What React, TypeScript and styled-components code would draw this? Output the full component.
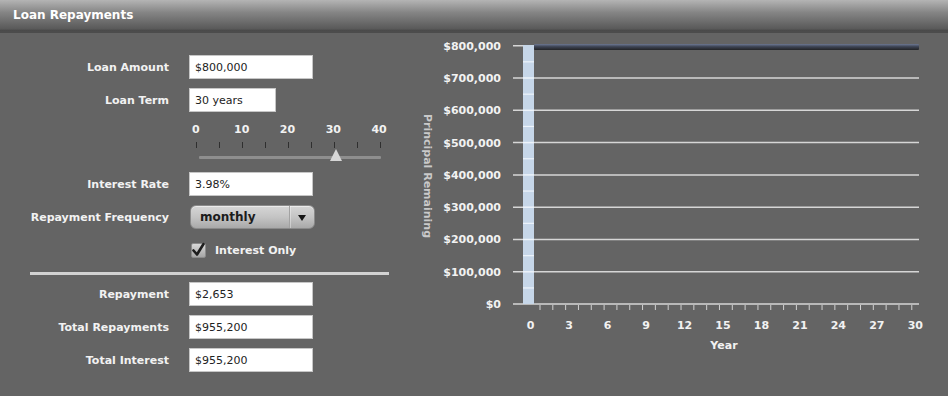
import React from 'react';
import styled, { createGlobalStyle } from 'styled-components';

const GlobalStyle = createGlobalStyle`
  html, body {
    margin: 0;
    padding: 0;
    background: #646464;
  }
  * {
    box-sizing: border-box;
  }
`;

const Page = styled.div`
  width: 948px;
  height: 396px;
  overflow: hidden;
  background: #646464;
  font-family: 'DejaVu Sans', Verdana, sans-serif;
  color: #f2f2f2;
`;

const Header = styled.div`
  height: 33px;
  padding-left: 13px;
  display: flex;
  align-items: center;
  padding-bottom: 1px;
  background: linear-gradient(#b4b4b4 0%, #858585 40%, #5a5a5a 92%, #474747 100%);
  border-bottom: 2px solid #4c4c4c;
`;

const Title = styled.h1`
  margin: 0;
  font-size: 12px;
  font-weight: bold;
  color: #ffffff;
`;

const Body = styled.div`
  display: flex;
  height: 363px;
`;

const FormPanel = styled.div`
  width: 410px;
  flex-shrink: 0;
  padding-top: 22px;
  display: flex;
  flex-direction: column;
  gap: 9px;
`;

const Row = styled.div`
  display: flex;
  align-items: center;
  height: 24px;
`;

const Label = styled.label`
  width: 169px;
  flex-shrink: 0;
  margin-right: 20px;
  text-align: right;
  font-size: 11px;
  font-weight: bold;
  color: #f2f2f2;
`;

const TextBox = styled.input<{ $w: number }>`
  width: ${(p) => p.$w}px;
  height: 24px;
  padding: 0 5px;
  border: 1px solid #c6c6c6;
  background: #ffffff;
  font-family: 'DejaVu Sans', Verdana, sans-serif;
  font-size: 11px;
  color: #222;
  outline: none;
`;

const SliderBlock = styled.div`
  margin-left: 173px;
  height: 42px;
  display: flex;
  flex-direction: column;
`;

const ScaleLabels = styled.div`
  display: grid;
  grid-template-columns: repeat(5, 45.8px);
  height: 18px;
  line-height: 18px;
  font-size: 11px;
  font-weight: bold;
  text-align: center;
  color: #f2f2f2;
`;

const Ticks = styled.div`
  margin: 3px 0 0 23px;
  width: 185px;
  height: 6px;
  display: flex;
  justify-content: space-between;
`;

const Tick = styled.span`
  width: 1px;
  height: 6px;
  background: #2f2f2f;
`;

const TrackWrap = styled.div`
  position: relative;
  margin: 1px 0 0 26px;
  width: 182px;
  height: 13px;
`;

const Track = styled.div`
  margin-top: 7px;
  height: 3px;
  background: #8e8e8e;
  border-radius: 1px;
`;

const Thumb = styled.div`
  position: absolute;
  top: 0;
  width: 0;
  height: 0;
  border-left: 6px solid transparent;
  border-right: 6px solid transparent;
  border-bottom: 12px solid #d6d6d6;
`;

const Dropdown = styled.div`
  width: 125px;
  height: 24px;
  margin-left: 1px;
  display: flex;
  border-radius: 6px;
  border: 1px solid #8a8a8a;
  background: linear-gradient(#d6d6d6 0%, #c4c4c4 50%, #a9a9a9 100%);
  box-shadow: inset 0 1px 0 rgba(255, 255, 255, 0.5);
`;

const DropValue = styled.div`
  flex: 1;
  padding-left: 9px;
  display: flex;
  align-items: center;
  font-size: 12px;
  font-weight: bold;
  color: #1c1c1c;
`;

const DropArrow = styled.div`
  width: 25px;
  display: flex;
  align-items: center;
  justify-content: center;
  border-left: 1px solid #a2a2a2;
  box-shadow: inset 1px 0 0 rgba(255, 255, 255, 0.35);

  &::after {
    content: '';
    border-left: 4px solid transparent;
    border-right: 4px solid transparent;
    border-top: 6px solid #151515;
    margin-top: 1px;
  }
`;

const CheckRow = styled.div`
  display: flex;
  align-items: center;
  height: 24px;
  margin-left: 191px;
  gap: 9px;
`;

const CheckBox = styled.div`
  width: 15px;
  height: 15px;
  border: 1px solid #8c8c8c;
  border-radius: 2px;
  background: linear-gradient(#d8d8d8, #a6a6a6);
  display: flex;
  align-items: center;
  justify-content: center;
  overflow: visible;
`;

const CheckLabel = styled.span`
  font-size: 11px;
  font-weight: bold;
  color: #f2f2f2;
`;

const Separator = styled.hr`
  margin: 1px 0 -2px 30px;
  width: 359px;
  height: 3px;
  border: none;
  background: #d2d2d2;
`;

const ChartPanel = styled.div`
  flex: 1;
`;

const ChartSvg = styled.svg`
  display: block;
  font-family: 'DejaVu Sans', Verdana, sans-serif;
  font-size: 11px;
  font-weight: bold;
`;

const yLabels = ['$800,000', '$700,000', '$600,000', '$500,000', '$400,000', '$300,000', '$200,000', '$100,000', '$0'];
const Y0 = 45.7;
const YSTEP = 32.3;
const XYEAR0 = 530.7;
const XSTEP = 12.82;

const Chart: React.FC = () => {
  const years = Array.from({ length: 11 }, (_, i) => i * 3);
  const minor = Array.from({ length: 30 }, (_, i) => 540 + i * XSTEP);
  return (
    <ChartSvg width={538} height={363} viewBox="410 33 538 363">
      <defs>
        <linearGradient id="lineGrad" x1="0" y1="0" x2="0" y2="1">
          <stop offset="0%" stopColor="#6d7892" />
          <stop offset="45%" stopColor="#3d4454" />
          <stop offset="100%" stopColor="#222326" />
        </linearGradient>
      </defs>

      {yLabels.map((t, i) => (
        <text key={t} x={501} y={Y0 + i * YSTEP} dy="0.36em" textAnchor="end" fill="#f2f2f2">
          {t}
        </text>
      ))}

      {yLabels.map((t, i) => (
        <line key={'g' + t} x1={513} x2={919} y1={Y0 + i * YSTEP} y2={Y0 + i * YSTEP} stroke="#d6d6d6" strokeWidth={1.5} />
      ))}

      <rect x={523} y={45} width={11} height={259} fill="#c6d6e8" />
      {yLabels.slice(1).map((t, i) => (
        <line key={'m' + t} x1={523} x2={534} y1={Y0 + (i + 0.5) * YSTEP} y2={Y0 + (i + 0.5) * YSTEP} stroke="#eef4fb" strokeWidth={1.2} />
      ))}
      {yLabels.slice(1, 8).map((t, i) => (
        <line key={'b' + t} x1={523} x2={534} y1={Y0 + (i + 1) * YSTEP} y2={Y0 + (i + 1) * YSTEP} stroke="#eef4fb" strokeWidth={1.5} />
      ))}

      <rect x={534} y={44} width={385} height={6} rx={1} fill="url(#lineGrad)" />

      {minor.map((x) => (
        <line key={x} x1={x} x2={x} y1={305} y2={310} stroke="#d0d0d0" strokeWidth={1} />
      ))}

      {years.map((y) => (
        <text key={y} x={XYEAR0 + y * XSTEP} y={325} dy="0.36em" textAnchor="middle" fill="#f2f2f2">
          {y}
        </text>
      ))}
      <text x={724} y={345} dy="0.36em" textAnchor="middle" fill="#f2f2f2">
        Year
      </text>

      <text x={428} y={176} dy="0.36em" textAnchor="middle" fill="#c9c9c9" transform="rotate(90 428 176)">
        Principal Remaining
      </text>
    </ChartSvg>
  );
};

const termValue = 30;
const thumbLeft = (termValue / 40) * 183.5 - 2.5 - 4;

const App: React.FC = () => {
  return (
    <Page>
      <GlobalStyle />
      <Header>
        <Title>Loan Repayments</Title>
      </Header>
      <Body>
        <FormPanel>
          <Row>
            <Label>Loan Amount</Label>
            <TextBox $w={124} defaultValue="$800,000" />
          </Row>
          <Row>
            <Label>Loan Term</Label>
            <TextBox $w={87} defaultValue="30 years" />
          </Row>
          <SliderBlock>
            <ScaleLabels>
              {[0, 10, 20, 30, 40].map((v) => (
                <span key={v}>{v}</span>
              ))}
            </ScaleLabels>
            <Ticks>
              {Array.from({ length: 9 }, (_, i) => (
                <Tick key={i} />
              ))}
            </Ticks>
            <TrackWrap>
              <Track />
              <Thumb style={{ left: thumbLeft }} />
            </TrackWrap>
          </SliderBlock>
          <Row>
            <Label>Interest Rate</Label>
            <TextBox $w={124} defaultValue="3.98%" />
          </Row>
          <Row>
            <Label>Repayment Frequency</Label>
            <Dropdown>
              <DropValue>monthly</DropValue>
              <DropArrow />
            </Dropdown>
          </Row>
          <CheckRow>
            <CheckBox>
              <svg width="15" height="15" viewBox="0 0 15 15" style={{ overflow: 'visible' }}>
                <path d="M2.5 7.5 L6 11.5 L12.5 1" fill="none" stroke="#1d1d1d" strokeWidth="2.6" strokeLinecap="round" strokeLinejoin="round" />
              </svg>
            </CheckBox>
            <CheckLabel>Interest Only</CheckLabel>
          </CheckRow>
          <Separator />
          <Row>
            <Label>Repayment</Label>
            <TextBox $w={124} defaultValue="$2,653" />
          </Row>
          <Row>
            <Label>Total Repayments</Label>
            <TextBox $w={124} defaultValue="$955,200" />
          </Row>
          <Row>
            <Label>Total Interest</Label>
            <TextBox $w={124} defaultValue="$955,200" />
          </Row>
        </FormPanel>
        <ChartPanel>
          <Chart />
        </ChartPanel>
      </Body>
    </Page>
  );
};

export default App;
